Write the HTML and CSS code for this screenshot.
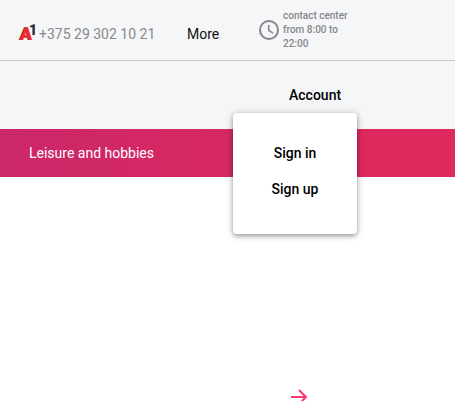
FILE: index.html
```
<!DOCTYPE html>
<html lang="en">
<head>
<meta charset="utf-8">
<title>Leisure and hobbies</title>
<link rel="stylesheet" href="styles.css">
</head>
<body>
<header class="header">
  <div class="topbar">
    <span class="logo"><b class="logo-a">A</b><b class="logo-one">1</b></span>
    <span class="phone">+375 29 302 10 21</span>
    <span class="more">More</span>
    <svg class="clock" viewBox="0 0 20 20" fill="none" stroke="#85868b"><circle cx="10" cy="10" r="9" stroke-width="2"/><path d="M9.7 5v5.4l4.4 2.7" stroke-width="1.6"/></svg>
    <span class="hours">contact center from 8:00 to 22:00</span>
  </div>
  <div class="userbar">
    <div class="account">Account
      <div class="menu"><span>Sign in</span><span>Sign up</span></div>
    </div>
  </div>
</header>
<nav class="nav">Leisure and hobbies</nav>
<main class="content">
  <svg class="arrow" viewBox="0 0 16 16" fill="none" stroke="#fa3970" stroke-width="2"><path d="M0 8h15M8 1l7 7-7 7"/></svg>
</main>
</body>
</html>
```
FILE: styles.css
```
* { box-sizing: border-box; }
body {
  margin: 0;
  height: 401px;
  overflow: hidden;
  background: #fff;
  color: #111;
  font: 14px/20px Roboto, sans-serif;
}
.header { background: #f5f6f8; }
.topbar {
  display: flex;
  align-items: center;
  height: 61px;
  padding: 0 0 1px 20px;
  border-bottom: 1px solid #c9cacd;
}
.logo {
  display: flex;
  width: 17px;
  height: 18px;
  margin: 6px 2px 0 0;
  font-weight: 900;
}
.logo-a {
  width: 9px;
  margin-top: 1px;
  color: #ef2b2d;
  font-size: 18px;
  line-height: 18px;
  transform: skewX(-3deg);
  text-shadow: -1px 0 #a51d25;
}
.logo-one {
  margin-top: -1px;
  color: #2b2b2d;
  font-size: 14px;
  line-height: 14px;
}
.phone { width: 148px; margin-top: 8px; color: #88898c; white-space: nowrap; }
.more { width: 72px; margin-top: 8px; }
.clock { width: 20px; height: 20px; margin: 0 4px 0 0; }
.hours {
  width: 70px;
  color: #85868b;
  font-size: 10px;
  font-weight: 500;
  line-height: 14px;
}
.userbar { height: 68px; padding: 24px 98px 0 0; }
.account {
  position: relative;
  width: 124px;
  margin-left: auto;
  padding-left: 56px;
  color: #000;
  font-weight: 500;
}
.menu {
  position: absolute;
  top: 28px;
  left: 0;
  display: flex;
  flex-direction: column;
  align-items: center;
  gap: 16px;
  width: 124px;
  height: 121px;
  padding-top: 30px;
  border-radius: 4px;
  background: #fff;
  box-shadow: 0 2px 4px rgba(0, 0, 0, .28), 0 1px 8px rgba(0, 0, 0, .2);
}
.nav {
  height: 48px;
  padding: 14px 29px;
  background: linear-gradient(90deg, #cb2769, #de295e 80%, #de295e);
  color: #fff;
}
.content { height: 224px; padding: 212px 0 0 291px; }
.arrow { display: block; width: 16px; height: 16px; }
```
